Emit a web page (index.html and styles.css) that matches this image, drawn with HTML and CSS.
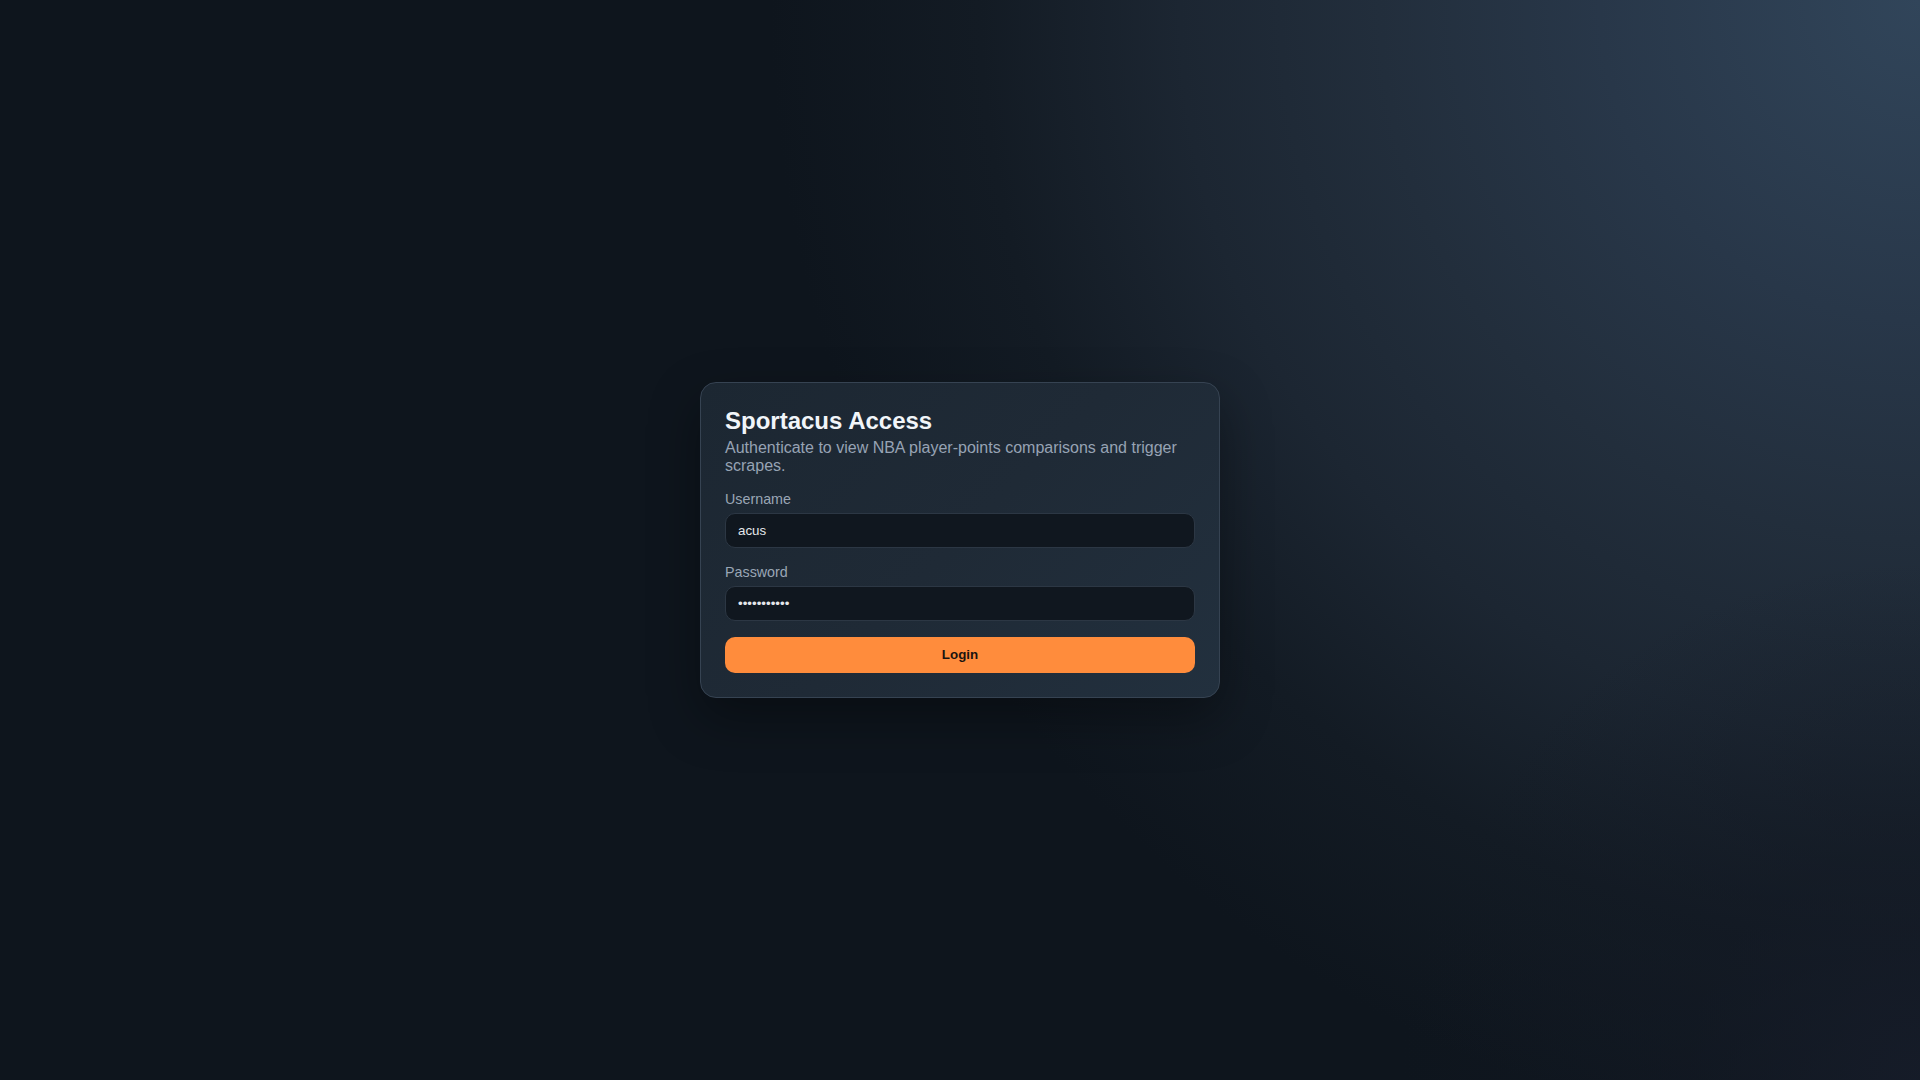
FILE: index.html
```html
<!DOCTYPE html>
<html lang="en">
<head>
<meta charset="utf-8">
<title>Sportacus Access</title>
<link rel="stylesheet" href="styles.css">
</head>
<body>
<main class="page">
  <section class="card">
    <h1 class="title">Sportacus Access</h1>
    <p class="subtitle">Authenticate to view NBA player-points comparisons and trigger scrapes.</p>
    <form class="form" onsubmit="return false;">
      <label class="field">
        <span class="label">Username</span>
        <input class="input" type="text" value="acus">
      </label>
      <label class="field">
        <span class="label">Password</span>
        <input class="input" type="password" value="password123">
      </label>
      <button class="button" type="submit">Login</button>
    </form>
  </section>
</main>
</body>
</html>
```

FILE: styles.css
```css
* {
  box-sizing: border-box;
}

html, body {
  margin: 0;
  padding: 0;
  height: 100%;
}

body {
  font-family: "Liberation Sans", Arial, sans-serif;
  line-height: normal;
  color: #e5e7eb;
  background-color: #0e151d;
  background-image:
    radial-gradient(circle 520px at 100% 100%, rgba(22, 28, 41, 0.9) 0%, rgba(19, 25, 36, 0.5) 45%, rgba(14, 21, 29, 0) 100%),
    radial-gradient(circle 1150px at 100% 0%, #31455a 0px, #283749 320px, #222e3c 540px, #1c2632 740px, #131b24 940px, #0e151d 1150px);
}

.page {
  min-height: 100vh;
  display: flex;
  align-items: center;
  justify-content: center;
}

.card {
  width: 520px;
  padding: 24px;
  border: 1px solid #364352;
  border-radius: 16px;
  background: linear-gradient(135deg, #1c2732 0%, #1f2a36 50%, #22303e 100%);
  box-shadow: 0 20px 50px rgba(0, 0, 0, 0.35);
}

.title {
  margin: 0;
  font-size: 24px;
  font-weight: 700;
  color: #f1f5f9;
}

.subtitle {
  margin: 4px 0 16px;
  font-size: 16px;
  color: #97a3b4;
}

.form {
  display: flex;
  flex-direction: column;
  gap: 16px;
}

.field {
  display: flex;
  flex-direction: column;
  gap: 6px;
}

.label {
  font-size: 14.3px;
  color: #9aa6b5;
}

.input {
  width: 100%;
  margin: 0;
  padding: 8px 12px;
  font-family: "Liberation Sans", Arial, sans-serif;
  font-size: 13.333px;
  line-height: 17px;
  color: #e5e7eb;
  background: #10171f;
  border: 1px solid #2c3744;
  border-radius: 10px;
  outline: none;
}

.button {
  width: 100%;
  margin: 0;
  padding: 10px 12px;
  font-family: "Liberation Sans", Arial, sans-serif;
  font-size: 13.333px;
  font-weight: 700;
  line-height: 16px;
  color: #1a1410;
  background: #ff8c3c;
  border: none;
  border-radius: 10px;
  cursor: pointer;
}
```
